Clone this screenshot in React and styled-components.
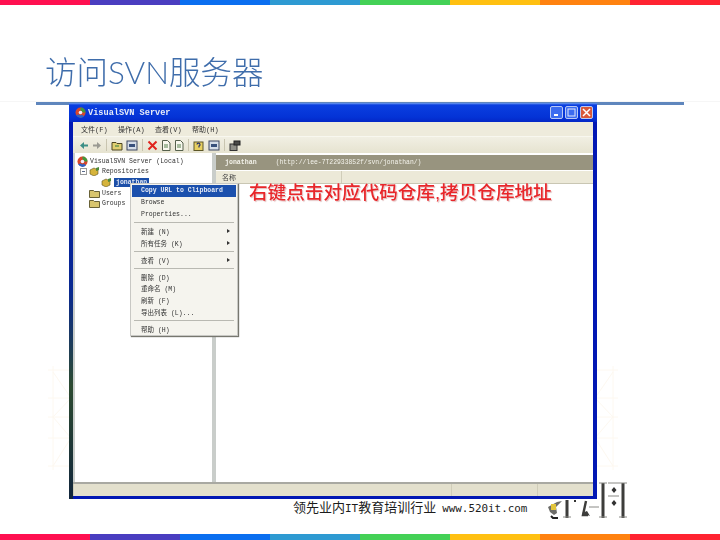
import React from 'react';
import styled, { createGlobalStyle } from 'styled-components';

const stripeColors = ['#ff1050', '#4a3dc0', '#0b6ff0', '#2e9ad2', '#44d156', '#ffc011', '#ff8210', '#ff2331'];

const menuItems = [
  { label: 'Copy URL to Clipboard', active: true },
  { label: 'Browse' },
  { label: 'Properties...', end: true },
  { label: '新建 (N)', arrow: true },
  { label: '所有任务 (K)', arrow: true, end: true },
  { label: '查看 (V)', arrow: true, end: true },
  { label: '删除 (D)' },
  { label: '重命名 (M)' },
  { label: '刷新 (F)' },
  { label: '导出列表 (L)...', end: true },
  { label: '帮助 (H)' },
];

const GlobalStyle = createGlobalStyle`
  html, body {
    margin: 0;
    padding: 0;
    background: #fff;
  }
`;

const Slide = styled.div`
  position: relative;
  width: 720px;
  height: 540px;
  overflow: hidden;
  display: flex;
  flex-direction: column;
  background: #fff;
  font-family: "Liberation Sans", "Noto Sans CJK SC", sans-serif;
`;

const Stripe = styled.div`
  display: grid;
  grid-template-columns: repeat(8, 90px);
  height: ${p => p.$height}px;
  flex: none;
  span {
    display: block;
  }
`;

const Header = styled.div`
  height: 97px;
  flex: none;
  box-sizing: border-box;
  padding: 48px 0 0 45px;
  border-bottom: 1px solid #f6f6f6;
`;

const Title = styled.h1`
  margin: 0;
  font-family: "Lato", "Noto Sans CJK SC", sans-serif;
  font-size: 31.500px;
  line-height: 38px;
  font-weight: 300;
  color: #3f6dab;
  filter: blur(0.3px);
`;

const Rule = styled.div`
  flex: none;
  height: 3px;
  margin: 0 36px;
  background: #5f86bd;
`;

const Window = styled.div`
  position: relative;
  z-index: 1;
  flex: none;
  box-sizing: border-box;
  width: 528px;
  height: 396px;
  margin: -2px 0 0 69px;
  display: flex;
  flex-direction: column;
  border: solid #0218b4;
  border-width: 0 4px 3px;
  background: #ece9d8;
  font-family: "Liberation Mono", "Noto Sans CJK SC", monospace;
  color: #333;
  &::before {
    content: '';
    position: absolute;
    left: -4px;
    top: 19px;
    bottom: -3px;
    width: 4px;
    background: linear-gradient(#0218b4 0, #0a2a90 45%, #2c4a30 70%, #12263c 100%);
  }
`;

const TitleBar = styled.div`
  flex: none;
  height: 19px;
  margin: 0 -4px;
  padding: 0 4px 0 6px;
  display: flex;
  align-items: center;
  gap: 2px;
  background: linear-gradient(#6f9df0 0, #0a3fe0 2px, #0433d6 14px, #0427c6 100%);
  color: #e8ecf8;
  font-size: 8.6px;
  font-weight: bold;
`;

const TitleText = styled.span`
  flex: 1;
  filter: blur(0.35px);
`;

const WinButton = styled.span`
  width: 13px;
  height: 13px;
  box-sizing: border-box;
  border: 1px solid #b9c8f4;
  border-radius: 2px;
  background: ${p => (p.$close ? '#d9583a' : '#3c6cf0')};
  display: flex;
  align-items: center;
  justify-content: center;
  svg {
    display: block;
  }
`;

const MenuBar = styled.div`
  flex: none;
  height: 14px;
  display: flex;
  align-items: center;
  gap: 10.400px;
  padding-left: 8px;
  font-size: 7px;
  background: #eeebdc;
  filter: blur(0.35px);
`;

const ToolBar = styled.div`
  flex: none;
  height: 17px;
  display: flex;
  align-items: center;
  padding-left: 6px;
  gap: 3px;
  background: linear-gradient(#f1efe3, #e6e3d0);
  border-top: 1px solid #f8f7ef;
  box-sizing: border-box;
  svg {
    display: block;
    filter: blur(0.3px);
  }
`;

const ToolDivider = styled.span`
  width: 1px;
  height: 12px;
  margin: 0 1px;
  background: #c9c5b0;
`;

const Panes = styled.div`
  flex: none;
  height: 331px;
  box-sizing: border-box;
  display: grid;
  grid-template-columns: 137px 1fr;
  gap: 4px;
  background: #c9cdca;
  border-bottom: 2px solid #a9a9a2;
  padding-left: 2px;
  background-clip: padding-box;
`;

const Tree = styled.div`
  background: #fff;
  padding: 3px 0 0 2px;
  font-size: 6.5px;
  color: #333;
  display: flex;
  flex-direction: column;
`;

const TreeRow = styled.div`
  height: 10.600px;
  display: flex;
  align-items: center;
  gap: 2px;
  padding-left: ${p => p.$indent}px;
  white-space: nowrap;
  filter: blur(0.35px);
  svg {
    display: block;
    flex: none;
  }
`;

const Expander = styled.span`
  flex: none;
  width: 7px;
  height: 7px;
  box-sizing: border-box;
  border: 1px solid #9a9a9a;
  background: linear-gradient(#5a6a8a, #5a6a8a) center / 3px 1px no-repeat;
`;

const Selected = styled.span`
  background: #1c4fa8;
  color: #dfe6f4;
  padding: 1px 2px;
  font-weight: bold;
`;

const Detail = styled.div`
  background: #fff;
  display: flex;
  flex-direction: column;
`;

const DetailHead = styled.div`
  flex: none;
  margin-top: 2px;
  height: 15px;
  padding: 0 0 1px 9px;
  box-sizing: border-box;
  display: flex;
  align-items: center;
  gap: 19px;
  background: #98947f;
  color: #f3f2ea;
  font-size: 6.4px;
  filter: blur(0.35px);
  b {
    font-size: 6.6px;
  }
`;

const ColumnHead = styled.div`
  flex: none;
  height: 13px;
  margin-top: 1px;
  display: flex;
  align-items: center;
  background: #ece9d8;
  border-bottom: 1px solid #c9c6b3;
  font-size: 7px;
  color: #444;
  box-sizing: border-box;
`;

const Column = styled.span`
  width: 126px;
  height: 100%;
  box-sizing: border-box;
  padding: 1px 0 0 6px;
  border-right: 1px solid #d0cdb9;
  filter: blur(0.3px);
`;

const StatusBar = styled.div`
  flex: none;
  height: 12px;
  display: grid;
  grid-template-columns: 1fr 86px 56px;
  background: #e3e0cd;
  span {
    border-left: 1px solid #d0cdb9;
  }
`;

const ContextMenu = styled.div`
  position: absolute;
  left: 57px;
  top: 80px;
  width: 108px;
  height: 153px;
  box-sizing: border-box;
  padding: 1px;
  background: #f5f4ee;
  border: 1px solid #c8c8c4;
  box-shadow: 1px 1px 1px #77776f;
  font-size: 6.5px;
  color: #333;
`;

const MenuRow = styled.div`
  position: relative;
  height: 11.800px;
  display: flex;
  align-items: center;
  justify-content: space-between;
  padding: 0 6px 0 9px;
  white-space: nowrap;
  background: ${p => (p.$active ? '#1b50ad' : 'transparent')};
  color: ${p => (p.$active ? '#e4eaf6' : '#333')};
  font-weight: ${p => (p.$active ? 'bold' : 'normal')};
  filter: blur(0.35px);
`;

const MenuSeparator = styled.div`
  height: 1px;
  margin: 2px 2px;
  background: #b9b9b2;
`;

const Arrow = styled.i`
  border-left: 3px solid #333;
  border-top: 2.500px solid transparent;
  border-bottom: 2.500px solid transparent;
`;

const Annotation = styled.div`
  position: absolute;
  left: 176px;
  top: 79px;
  font-family: "Liberation Sans", "Noto Sans CJK SC", sans-serif;
  font-size: 18.600px;
  font-weight: 500;
  line-height: 22px;
  color: #e8262a;
  white-space: nowrap;
  text-shadow: 0 0 2px #fff, 1px 1px 1px #d8a8a8;
  filter: blur(0.3px);
`;

const Footer = styled.div`
  flex: none;
  padding: 1px 0 0 293px;
  height: 15px;
  display: flex;
  align-items: baseline;
  color: #1c1c1c;
  font-family: "DejaVu Sans Mono", "Noto Sans CJK SC", monospace;
  font-size: 13px;
  line-height: 15px;
  white-space: nowrap;
`;

const FooterLatin = styled.span`
  font-size: 10.900px;
  margin: ${p => p.$margin || '0'};
`;

const Logo = styled.svg`
  position: absolute;
  left: 545px;
  top: 480px;
  filter: blur(0.3px);
`;

const Ornament = styled.svg`
  position: absolute;
  top: 364px;
  left: ${p => p.$left}px;
  transform: ${p => (p.$flip ? 'scaleX(-1)' : 'none')};
`;

const BottomStripe = styled(Stripe)`
  margin-top: auto;
`;

const Stripes = ({ height, as: Comp = Stripe }) => (
  <Comp $height={height}>
    {stripeColors.map(color => (
      <span key={color} style={{ background: color }} />
    ))}
  </Comp>
);

const OrnamentLines = ({ left, flip }) => (
  <Ornament $left={left} $flip={flip} width="24" height="112" fill="none" stroke="#fdf8f0" strokeWidth="1">
    <path d="M5 2v104M0 6h24M0 34h24M0 53h24M0 74h24M0 102h24M5 8l18 26-18 19 18 21-18 28" />
  </Ornament>
);

const Folder = () => (
  <svg width="11" height="9" viewBox="0 0 11 9">
    <path d="M0.500 1.500h4l1 1h5v6h-10z" fill="#d9c56e" stroke="#5a5228" strokeWidth="0.900" />
  </svg>
);

const Repo = () => (
  <svg width="11" height="9" viewBox="0 0 11 9">
    <path d="M1 3l4-2 4 2v4l-4 2-4-2z" fill="#d6b43c" stroke="#5c5220" strokeWidth="0.600" />
    <path d="M7 1l3-1v3l-3 1z" fill="#4d8a3a" />
  </svg>
);

const Globe = () => (
  <svg width="11" height="11" viewBox="0 0 11 11">
    <circle cx="5.500" cy="5.500" r="5" fill="#d8462a" />
    <path d="M5.500 0.500a5 5 0 0 1 5 5h-3a2 2 0 0 0-2-2z" fill="#3f9a3a" />
    <path d="M1 8a5 5 0 0 0 8 1.500l-2-2a2 2 0 0 1-3 0z" fill="#2f62c4" />
    <circle cx="5.500" cy="5.500" r="1.800" fill="#eef" />
  </svg>
);

const ToolIcon = ({ kind }) => {
  if (kind === 'back' || kind === 'forward') {
    const flip = kind === 'forward';
    return (
      <svg width="10" height="9" viewBox="0 0 10 9">
        <path
          d={flip ? 'M1 3.500h4v-2.500l4 3.500-4 3.500v-2.500h-4z' : 'M9 3.500h-4v-2.500l-4 3.500 4 3.500v-2.500h4z'}
          fill={flip ? '#9a9a92' : '#3c8f86'}
        />
      </svg>
    );
  }
  if (kind === 'delete') {
    return (
      <svg width="11" height="11" viewBox="0 0 11 11">
        <path d="M1.500 1.500l8 8M9.500 1.500l-8 8" stroke="#e0241c" strokeWidth="2" />
      </svg>
    );
  }
  if (kind === 'folder') {
    return (
      <svg width="12" height="11" viewBox="0 0 12 11">
        <path d="M1 2.500h4l1 1h5v6.500h-10z" fill="#e0cf70" stroke="#4c4622" />
        <path d="M4 6h4" stroke="#2f7a3c" />
      </svg>
    );
  }
  if (kind === 'panel') {
    return (
      <svg width="12" height="11" viewBox="0 0 12 11">
        <rect x="1" y="1" width="10" height="9" fill="#d5dde8" stroke="#3c4660" />
        <rect x="3" y="4" width="6" height="3" fill="#38507c" />
      </svg>
    );
  }
  if (kind === 'page') {
    return (
      <svg width="10" height="11" viewBox="0 0 10 11">
        <path d="M1.500 0.500h5l2.500 2.500v7.500h-7.500z" fill="#f8f8ee" stroke="#55604c" />
        <path d="M3 5h4M3 7h4" stroke="#55804c" />
      </svg>
    );
  }
  if (kind === 'help') {
    return (
      <svg width="12" height="11" viewBox="0 0 12 11">
        <rect x="1" y="2" width="9" height="8.500" fill="#e8d060" stroke="#5c5628" />
        <path d="M4 4.500a1.500 1.500 0 1 1 2 1.500v1.500" fill="none" stroke="#26306c" strokeWidth="1.200" />
      </svg>
    );
  }
  return (
    <svg width="12" height="11" viewBox="0 0 12 11">
      <rect x="1" y="4" width="7" height="6.500" fill="#8f8f88" stroke="#333" />
      <rect x="5" y="1" width="6" height="4" fill="#4a4a48" stroke="#222" />
    </svg>
  );
};

// the tangled bars of the school logo in the corner
const CornerLogo = () => (
  <Logo width="86" height="40" viewBox="0 0 86 40">
    <path d="M3 27l9-5 5-1-6 6 1 6-3 2-4-3z" fill="#6d6d6a" />
    <path d="M6 24h5v6h-5z" fill="#e2c53c" />
    <path d="M6 36l2 2h5" stroke="#222" strokeWidth="2" fill="none" />
    <g stroke="#3d3d3b" strokeWidth="3" fill="none">
      <path d="M22 20v18M58 3v35M78 3v35" />
    </g>
    <path d="M41 21l-3 14h5" stroke="#3d3d3b" strokeWidth="2.400" fill="none" />
    <path d="M37 33l8 3-3-5" fill="#3d3d3b" />
    <g stroke="#8a8a86" strokeWidth="1" fill="none">
      <path d="M18 37h8M54 3h8M54 37h8M74 3h8M74 37h8M63 3h11M44 27h10M63 16h11" />
    </g>
    <path d="M69 7l2.500 3-2.500 3-2.500-3zM69 20l2.500 3-2.500 3-2.500-3z" fill="#333" />
    <path d="M29 20h2v2h-2z" fill="#333" />
  </Logo>
);

const App = () => (
  <Slide>
    <GlobalStyle />
    <Stripes height={5} />
    <Header>
      <Title>访问SVN服务器</Title>
    </Header>
    <Rule />
    <OrnamentLines left={48} />
    <OrnamentLines left={594} flip />
    <Window>
      <TitleBar>
        <Globe />
        <TitleText>VisualSVN Server</TitleText>
        <WinButton>
          <svg width="7" height="7"><rect x="1" y="5" width="4" height="2" fill="#fff" /></svg>
        </WinButton>
        <WinButton>
          <svg width="9" height="9"><rect x="1" y="1" width="7" height="7" fill="none" stroke="#dfe6fb" /></svg>
        </WinButton>
        <WinButton $close>
          <svg width="9" height="9"><path d="M1 1l7 7M8 1l-7 7" stroke="#fff" strokeWidth="1.500" /></svg>
        </WinButton>
      </TitleBar>
      <MenuBar>
        <span>文件(F)</span>
        <span>操作(A)</span>
        <span>查看(V)</span>
        <span>帮助(H)</span>
      </MenuBar>
      <ToolBar>
        <ToolIcon kind="back" />
        <ToolIcon kind="forward" />
        <ToolDivider />
        <ToolIcon kind="folder" />
        <ToolIcon kind="panel" />
        <ToolDivider />
        <ToolIcon kind="delete" />
        <ToolIcon kind="page" />
        <ToolIcon kind="page" />
        <ToolDivider />
        <ToolIcon kind="help" />
        <ToolIcon kind="panel" />
        <ToolDivider />
        <ToolIcon kind="server" />
      </ToolBar>
      <Panes>
        <Tree>
          <TreeRow $indent={0}><Globe />VisualSVN Server (Local)</TreeRow>
          <TreeRow $indent={3}><Expander /><Repo />Repositories</TreeRow>
          <TreeRow $indent={24}><Repo /><Selected>jonathan</Selected></TreeRow>
          <TreeRow $indent={12}><Folder />Users</TreeRow>
          <TreeRow $indent={12}><Folder />Groups</TreeRow>
        </Tree>
        <Detail>
          <DetailHead>
            <b>jonathan</b>
            <span>(http://lee-7T22933852f/svn/jonathan/)</span>
          </DetailHead>
          <ColumnHead>
            <Column>名称</Column>
          </ColumnHead>
        </Detail>
      </Panes>
      <StatusBar>
        <span />
        <span />
        <span />
      </StatusBar>
      <ContextMenu>
        {menuItems.map(item => (
          <React.Fragment key={item.label}>
            <MenuRow $active={item.active}>
              {item.label}
              {item.arrow && <Arrow />}
            </MenuRow>
            {item.end && <MenuSeparator />}
          </React.Fragment>
        ))}
      </ContextMenu>
      <Annotation>右键点击对应代码仓库,拷贝仓库地址</Annotation>
    </Window>
    <Footer>
      领先业内<FooterLatin>IT</FooterLatin>教育培训行业<FooterLatin $margin="0 0 0 6px">www.520it.com</FooterLatin>
    </Footer>
    <CornerLogo />
    <Stripes height={6} as={BottomStripe} />
  </Slide>
);

export default App;
